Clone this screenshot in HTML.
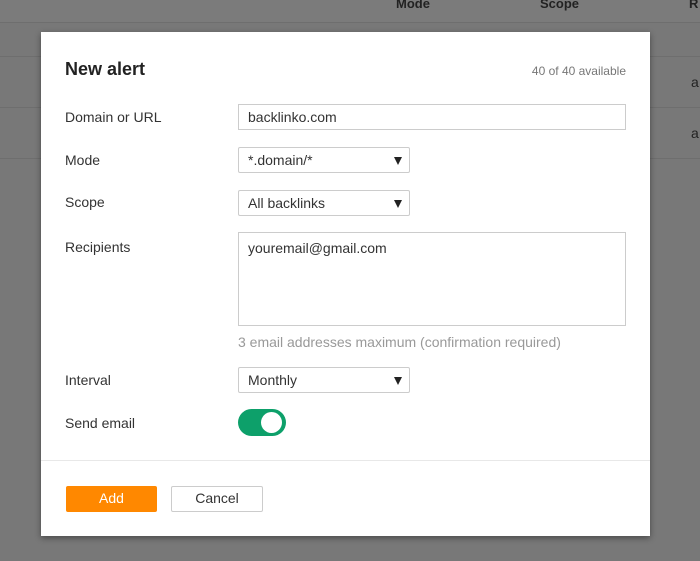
<!DOCTYPE html><html><head><style>
body{margin:0;width:700px;height:561px;background:#787878;font-family:"Liberation Sans",sans-serif;position:relative;overflow:hidden;color:#333}
.a{position:absolute}
.l{position:absolute;left:65px;font-size:14px;color:#333}
.inp{position:absolute;border:1px solid #ccc;background:#fff;font-size:14px;color:#333;box-sizing:border-box;padding-left:9px}
.sel{border-radius:2px}
.sel:after{content:"";position:absolute;right:7px;top:9px;border-left:4.5px solid transparent;border-right:4.5px solid transparent;border-top:8px solid #222}
</style></head><body>
<div class="a" style="left:0;top:0;width:700px;height:22px;background:#7b7b7b"></div>
<div class="a" style="left:0;top:22px;width:700px;height:1px;background:#6e6e6e"></div>
<div class="a" style="left:0;top:56px;width:700px;height:1px;background:#6e6e6e"></div>
<div class="a" style="left:0;top:107px;width:700px;height:1px;background:#6e6e6e"></div>
<div class="a" style="left:0;top:158px;width:700px;height:1px;background:#6e6e6e"></div>
<div class="a" style="left:396px;top:-4px;font-size:13px;font-weight:bold;color:#222">Mode</div>
<div class="a" style="left:540px;top:-4px;font-size:13px;font-weight:bold;color:#222">Scope</div>
<div class="a" style="left:689px;top:-4px;font-size:13px;font-weight:bold;color:#222">R</div>
<div class="a" style="left:691px;top:74px;font-size:14px;color:#222">a</div>
<div class="a" style="left:691px;top:125px;font-size:14px;color:#222">a</div>
<div class="a" style="left:41px;top:32px;width:609px;height:504px;background:#fff;box-shadow:0 2px 6px rgba(0,0,0,.4)"></div>
<div class="a" style="left:65px;top:59px;font-size:18px;font-weight:bold;color:#222">New alert</div>
<div class="a" style="right:74px;top:64px;font-size:12px;color:#777">40 of 40 available</div>
<div class="l" style="top:109px">Domain or URL</div>
<div class="inp" style="left:238px;top:104px;width:388px;height:26px;line-height:24px">backlinko.com</div>
<div class="l" style="top:152px">Mode</div>
<div class="inp sel" style="left:238px;top:147px;width:172px;height:26px;line-height:24px">*.domain/*</div>
<div class="l" style="top:194px">Scope</div>
<div class="inp sel" style="left:238px;top:190px;width:172px;height:26px;line-height:24px">All backlinks</div>
<div class="l" style="top:239px">Recipients</div>
<div class="inp" style="left:238px;top:232px;width:388px;height:94px;padding-top:7px">youremail@gmail.com</div>
<div class="a" style="left:238px;top:334px;font-size:14px;color:#999">3 email addresses maximum (confirmation required)</div>
<div class="l" style="top:372px">Interval</div>
<div class="inp sel" style="left:238px;top:367px;width:172px;height:26px;line-height:24px">Monthly</div>
<div class="l" style="top:415px">Send email</div>
<div class="a" style="left:238px;top:409px;width:48px;height:27px;border-radius:14px;background:#0da06a"></div>
<div class="a" style="left:261px;top:412px;width:21px;height:21px;border-radius:50%;background:#fff"></div>
<div class="a" style="left:41px;top:460px;width:609px;height:1px;background:#e8e8e8"></div>
<div class="a" style="left:66px;top:486px;width:91px;height:26px;background:#ff8800;border-radius:2px;color:#fff;font-size:14px;text-align:center;line-height:25px">Add</div>
<div class="a" style="left:171px;top:486px;width:92px;height:26px;border:1px solid #ccc;box-sizing:border-box;border-radius:2px;font-size:14px;text-align:center;line-height:23px;color:#333">Cancel</div>
</body></html>
